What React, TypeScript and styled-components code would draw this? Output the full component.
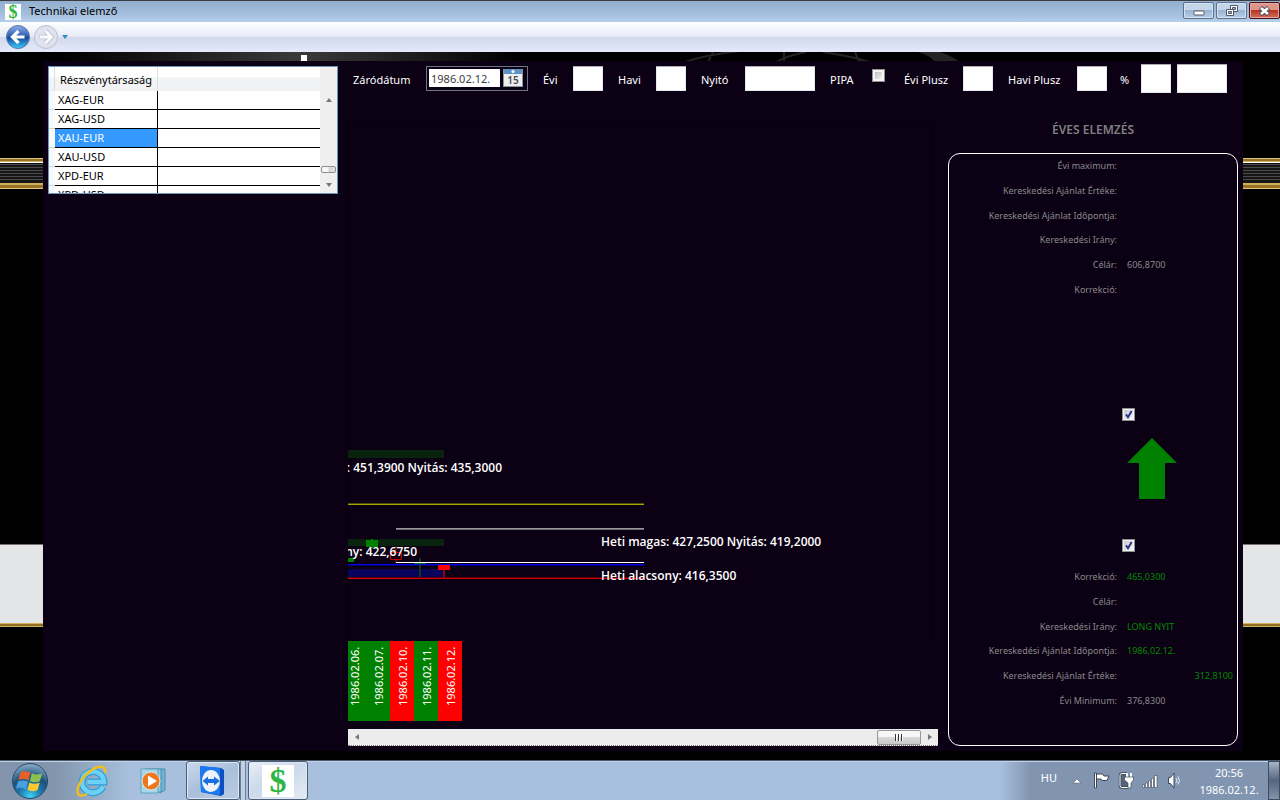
import React from "react";
import styled, { createGlobalStyle } from "styled-components";

const GlobalStyle = createGlobalStyle`
  * { box-sizing: border-box; }
  body {
    margin: 0;
    background: #000;
    font-family: "Noto Sans", "Open Sans", sans-serif;
    font-size: 11px;
    line-height: 16px;
    color: #fff;
  }
  button, input { font: inherit; }
`;

const Screen = styled.div`
  display: flex;
  flex-direction: column;
  min-height: 100vh;
`;

/* ---------- window frame ---------- */

const TitleBar = styled.header`
  display: flex;
  align-items: center;
  height: 22px;
  padding-left: 5px;
  border-top: 1px solid #3b3b42;
  background: linear-gradient(#93afcf, #a3bedc 60%, #b4cfec);
  color: #000;
`;

const AppTitle = styled.h1`
  flex: 1;
  margin: 0 0 2px 8px;
  font-size: 11px;
  font-weight: 400;
`;

const WindowButtons = styled.div`
  display: flex;
  align-self: flex-start;
  gap: 2px;
  padding-top: 1px;
`;

const WindowButton = styled.button<{ $danger?: boolean }>`
  display: flex;
  align-items: center;
  justify-content: center;
  width: 31px;
  height: 17px;
  padding: 0;
  border: 1px solid ${(p) => (p.$danger ? "#4a0f18" : "#5c708c")};
  border-radius: 2px;
  box-shadow: inset 0 0 0 1px ${(p) => (p.$danger ? "#e3a89f" : "#d5e3f2")};
  background: ${(p) =>
    p.$danger
      ? "linear-gradient(#dd9588 45%, #b9351f 50%, #d0705a)"
      : "linear-gradient(#c3d5e9 45%, #9ab4d0 50%, #b7cee6)"};
`;

const NavBar = styled.nav`
  display: flex;
  align-items: center;
  height: 30px;
  padding-left: 5px;
  background: linear-gradient(#fff, #e7ebf6 48%, #d1d9ec 52%, #e6eafa);
`;

const NavButton = styled.button`
  display: flex;
  padding: 0;
  border: 0;
  background: none;
`;

/* ---------- workspace ---------- */

const Workspace = styled.main`
  position: relative;
  flex: 1;
  display: flex;
  padding: 9px 37px 9px 43px;
  background:
    linear-gradient(
        #d9c27a 1px, #9a7426 1px 3px, #cdb05a 3px 4px, #fff 4px 5px, #111 5px 6px,
        #4a4a4a 6px 7px, #161616 7px 9px, #4a4a4a 9px 10px, #161616 10px 12px,
        #4a4a4a 12px 13px, #161616 13px 15px, #4a4a4a 15px 16px, #161616 16px 18px,
        #4a4a4a 18px 19px, #161616 19px 21px, #4a4a4a 21px 22px, #161616 22px 25px,
        #cdb05a 25px 27px, #9a7426 27px 30px, #e0c878 30px
      )
      0 106px / 100% 31px no-repeat,
    linear-gradient(
        #77706e 1px, #e4e5e7 1px 79px, #cdb05a 79px 80px, #8f6c22 80px 82px, #cdb05a 82px
      )
      0 492px / 100% 83px no-repeat,
    linear-gradient(90deg, #000 60px, #3a3a3a 300px, #262626 380px, #000 520px) 0 0 / 100% 9px
      no-repeat,
    #000;
`;

const Backdrop = styled.svg`
  position: absolute;
  top: 0;
  left: 0;
  width: 100%;
  height: 9px;
`;

const Panel = styled.section`
  flex: 1;
  min-width: 0;
  display: grid;
  grid-template-columns: 290px minmax(0, 1fr) 290px;
  grid-template-rows: 25px 1fr;
  column-gap: 10px;
  padding: 5px;
  background: #0c0014;
`;

/* ---------- company list ---------- */

const CompanyGrid = styled.div`
  grid-row: 1 / 3;
  align-self: start;
  display: flex;
  height: 128px;
  border: 1px solid #6c95bd;
  background: #fff;
  overflow: hidden;
`;

const CompanyTable = styled.table`
  flex: 1;
  align-self: flex-start;
  table-layout: fixed;
  border-collapse: separate;
  border-spacing: 0;
  color: #000;
`;

const HeadCell = styled.th<{ $width?: number }>`
  width: ${(p) => (p.$width ? `${p.$width}px` : "auto")};
  height: 24px;
  padding: 2px 0 0 5px;
  border-right: 1px solid #dcdde0;
  background: linear-gradient(#fff 40%, #f3f4f6 45%, #f0f1f3);
  text-align: left;
  font-weight: 400;
  white-space: nowrap;
  &:last-child { border-right: 0; }
`;

const RowHead = styled.td`
  padding: 0;
  border-bottom: 1px solid #d5d5d5;
  background: #f7f8fa;
`;

const Cell = styled.td<{ $selected?: boolean }>`
  height: 19px;
  padding: 1px 3px;
  border-bottom: 1px solid #000;
  border-right: ${(p) => (p.$selected === undefined ? "0" : "1px solid #000")};
  background: ${(p) => (p.$selected ? "#3399ff" : "#fff")};
  color: ${(p) => (p.$selected ? "#fff" : "#000")};
  white-space: nowrap;
`;

const VerticalScroll = styled.div`
  display: flex;
  flex-direction: column;
  align-items: center;
  width: 17px;
  padding-top: 24px;
  background: #efefef;
`;

const ScrollButton = styled.button`
  display: flex;
  align-items: center;
  justify-content: center;
  width: 17px;
  height: 17px;
  padding: 0;
  border: 0;
  background: none;
`;

const VerticalThumb = styled.div`
  width: 15px;
  height: 7px;
  margin: auto 0 3px;
  border: 1px solid #8f8f8f;
  border-radius: 2px;
  background: linear-gradient(90deg, #f7f7f7 45%, #d5d5d5 55%, #e2e2e2);
`;

/* ---------- filter bar ---------- */

const FilterBar = styled.form`
  grid-column: 2 / 4;
  display: flex;
  align-items: center;
  padding-left: 5px;
`;

const FieldLabel = styled.label<{ $width: number }>`
  flex: none;
  width: ${(p) => p.$width}px;
  padding-top: 2px;
  white-space: nowrap;
`;

const TextField = styled.input<{ $width: number; $gap?: number; $tall?: boolean }>`
  flex: none;
  width: ${(p) => p.$width}px;
  height: ${(p) => (p.$tall ? 29 : 25)}px;
  margin-right: ${(p) => p.$gap ?? 15}px;
  padding: 0 3px;
  border: 1px solid #e3e9ef;
  border-top-color: #abadb3;
  border-radius: 1px;
  background: #fff;
  color: #000;
`;

const DatePicker = styled.div`
  flex: none;
  display: flex;
  gap: 3px;
  width: 102px;
  height: 25px;
  margin-right: 15px;
  padding: 2px;
  border: 1px solid #6b7686;
`;

const DateInput = styled.input`
  width: 71px;
  height: 18px;
  padding: 0 2px;
  border: 0;
  background: #fff;
  color: #3c3c3c;
`;

const CalendarButton = styled.button`
  display: flex;
  padding: 0;
  border: 0;
  background: none;
`;

const Check = styled.input`
  appearance: none;
  flex: none;
  width: 13px;
  height: 13px;
  margin: 0;
  border: 1px solid #8e8f8f;
  background: linear-gradient(135deg, #b9bdc4, #f2f2f2) 50% / 7px 7px no-repeat, #f4f4f4;
  &:checked {
    background:
      url("data:image/svg+xml,%3Csvg xmlns='http://www.w3.org/2000/svg' viewBox='0 0 11 11'%3E%3Cpath d='M3 5.4 5 8.2 8.6 2' fill='none' stroke='%232b2f86' stroke-width='1.9'/%3E%3C/svg%3E"),
      linear-gradient(135deg, #c5c9cf, #f6f6f6) 50% / 9px 9px no-repeat, #f4f4f4;
  }
`;

const PipaCheck = styled(Check)`
  align-self: flex-start;
  margin: 3px 19px 0 0;
`;

/* ---------- chart ---------- */

const ChartPane = styled.div`
  display: flex;
  flex-direction: column;
  min-width: 0;
  padding-top: 30px;
  overflow: hidden;
`;

const ChartDrawing = styled.svg`
  flex: none;
  width: 100%;
  height: 520px;
  text {
    font-family: "Open Sans", sans-serif;
    font-size: 12px;
    font-weight: 600;
    fill: #fff;
  }
`;

const DateStrip = styled.div`
  display: flex;
  margin-left: -6px;
`;

const DateTile = styled.time<{ $up: boolean }>`
  display: flex;
  align-items: center;
  width: 24px;
  height: 80px;
  padding: 15px 5px 0 3px;
  writing-mode: vertical-rl;
  transform: rotate(180deg);
  font-size: 11px;
  background: ${(p) => (p.$up ? "#008000" : "#ff0000")};
`;

const HorizontalScroll = styled.div`
  display: flex;
  align-items: center;
  height: 17px;
  margin-top: auto;
  border-bottom: 1px dotted #777;
  background: #ececec;
`;

const HorizontalThumb = styled.div`
  display: flex;
  align-items: center;
  justify-content: center;
  gap: 1px;
  width: 44px;
  height: 15px;
  margin-left: auto;
  border: 1px solid #979797;
  border-radius: 2px;
  background: linear-gradient(#f6f6f6 45%, #d8d8d8 50%, #c9c9c9);
`;

const Grip = styled.span`
  width: 2px;
  height: 7px;
  border-left: 1px solid #333;
  background: #fff;
`;

/* ---------- yearly analysis ---------- */

const AnalysisPane = styled.aside`
  display: flex;
  flex-direction: column;
  padding-top: 31px;
`;

const AnalysisTitle = styled.h2`
  margin: 0 0 15px;
  font-size: 12px;
  font-weight: 600;
  line-height: 16px;
  text-align: center;
  color: #808080;
`;

const AnalysisBox = styled.div`
  flex: 1;
  display: flex;
  flex-direction: column;
  border: 1px solid #fff;
  border-radius: 12px;
`;

const Facts = styled.dl`
  display: grid;
  grid-template-columns: 168px 1fr;
  grid-template-rows: repeat(6, 1fr);
  align-items: center;
  column-gap: 10px;
  height: 148px;
  margin: 0;
  padding-right: 4px;
  font-size: 9px;
  color: #8a8a8a;
`;

const FactName = styled.dt`
  text-align: right;
  white-space: nowrap;
`;

const FactValue = styled.dd<{ $green?: boolean; $end?: boolean }>`
  margin: 0;
  color: ${(p) => (p.$green ? "#008a00" : "#8a8a8a")};
  text-align: ${(p) => (p.$end ? "right" : "left")};
`;

const Signal = styled.div`
  display: flex;
  flex-direction: column;
  align-items: flex-start;
  padding: 106px 0 13px 173px;
`;

const SignalArrow = styled.svg`
  margin: 17px 0 40px 5px;
`;

/* ---------- taskbar ---------- */

const Taskbar = styled.footer`
  display: flex;
  align-items: center;
  height: 40px;
  border-top: 1px solid #4c5a6c;
  box-shadow: inset 0 1px 0 #c3d5ea;
  background:
    linear-gradient(90deg, transparent, #8295b0 30px) 100% 0 / 280px 100% no-repeat,
    linear-gradient(90deg, #8295ad 55px, #a8c0dd 130px);
`;

const TaskButton = styled.button<{ $width: number; $open?: boolean; $active?: boolean }>`
  display: flex;
  align-items: center;
  justify-content: center;
  width: ${(p) => p.$width}px;
  height: 39px;
  padding: 0;
  border: ${(p) => (p.$open ? "1px solid #4d5f78" : "0")};
  border-radius: 3px;
  box-shadow: ${(p) => (p.$open ? "inset 0 0 0 1px #dce7f3" : "none")};
  background: ${(p) =>
    p.$active
      ? "linear-gradient(150deg, #e9eff7, #cbd9ea 45%, #e4ebf4)"
      : p.$open
        ? "linear-gradient(150deg, #cbdaec, #a9bfdb 50%, #b9cce3)"
        : "none"};
`;

const StackedEdge = styled.span`
  width: 6px;
  height: 39px;
  margin-right: 2px;
  border: solid #6c7f99;
  border-width: 0 1px;
  background: #bfd0e5;
`;

const Tray = styled.div`
  display: flex;
  align-items: center;
  gap: 8px;
  margin-left: auto;
`;

const Language = styled.span`
  margin: 0 8px 6px 0;
`;

const TrayExpander = styled.button`
  display: flex;
  margin-right: 4px;
  padding: 0;
  border: 0;
  background: none;
`;

const Clock = styled.time`
  width: 78px;
  line-height: 17px;
  text-align: center;
`;

const ShowDesktop = styled.button`
  width: 12px;
  height: 39px;
  padding: 0;
  border: 1px solid #3e4b5e;
  background: linear-gradient(#a5b3c6, #54657e 50%, #8393aa);
`;

const DollarBadge = styled.span<{ $size: number }>`
  display: flex;
  align-items: center;
  justify-content: center;
  width: ${(p) => p.$size}px;
  height: ${(p) => p.$size}px;
  background: #fff;
  color: #2db742;
  font-family: "Liberation Serif", serif;
  font-size: ${(p) => p.$size + 2}px;
  font-weight: 700;
  line-height: ${(p) => p.$size}px;
`;

const companies = ["XAG-EUR", "XAG-USD", "XAU-EUR", "XAU-USD", "XPD-EUR", "XPD-USD"];

const tradingDays = [
  { date: "1986.02.06.", up: true },
  { date: "1986.02.07.", up: true },
  { date: "1986.02.10.", up: false },
  { date: "1986.02.11.", up: true },
  { date: "1986.02.12.", up: false },
];

type Fact = { name: string; value?: string; green?: boolean; end?: boolean };

const upperFacts: Fact[] = [
  { name: "Évi maximum:" },
  { name: "Kereskedési Ajánlat Értéke:" },
  { name: "Kereskedési Ajánlat Időpontja:" },
  { name: "Kereskedési Irány:" },
  { name: "Célár:", value: "606,8700" },
  { name: "Korrekció:" },
];

const lowerFacts: Fact[] = [
  { name: "Korrekció:", value: "465,0300", green: true },
  { name: "Célár:" },
  { name: "Kereskedési Irány:", value: "LONG NYIT", green: true },
  { name: "Kereskedési Ajánlat Időpontja:", value: "1986.02.12.", green: true },
  { name: "Kereskedési Ajánlat Értéke:", value: "312,8100", green: true, end: true },
  { name: "Évi Minimum:", value: "376,8300" },
];

const FactList = ({ facts }: { facts: Fact[] }) => (
  <Facts>
    {facts.map((f) => (
      <React.Fragment key={f.name}>
        <FactName>{f.name}</FactName>
        <FactValue $green={f.green} $end={f.end}>
          {f.value}
        </FactValue>
      </React.Fragment>
    ))}
  </Facts>
);

const Triangle = ({ points, color = "#777" }: { points: string; color?: string }) => (
  <svg width="8" height="8" viewBox="0 0 8 8" aria-hidden="true">
    <polygon points={points} fill={color} />
  </svg>
);

const WindowFrame = () => (
  <>
    <TitleBar>
      <DollarBadge $size={16}>$</DollarBadge>
      <AppTitle>Technikai elemző</AppTitle>
      <WindowButtons>
        <WindowButton aria-label="Kis méret">
          <svg width="12" height="10" viewBox="0 0 12 10">
            <rect x="1" y="5" width="10" height="4" rx="0.5" fill="#fff" stroke="#535666" />
          </svg>
        </WindowButton>
        <WindowButton aria-label="Előző méret">
          <svg width="12" height="12" viewBox="0 0 12 12" stroke="#535666">
            <path d="M4.500 .5h7v6h-7z" fill="#fff" />
            <path d="M6.500 2.500h3v2h-3z" fill="#9ab4d0" />
            <path d="M.5 4.500h7v6h-7z" fill="#fff" />
            <path d="M2.500 6.500h3v2h-3z" fill="#9ab4d0" />
          </svg>
        </WindowButton>
        <WindowButton $danger aria-label="Bezárás">
          <svg width="13" height="10" viewBox="0 0 13 10">
            <path d="M2.500 1.500 10.500 8.500M10.500 1.500 2.500 8.500" stroke="#4c4f62" strokeWidth="4.600" />
            <path d="M3 2 10 8M10 2 3 8" stroke="#fff" strokeWidth="2.600" />
          </svg>
        </WindowButton>
      </WindowButtons>
    </TitleBar>
    <NavBar>
      <NavButton aria-label="Vissza">
        <svg width="28" height="26" viewBox="0 0 28 26">
          <defs>
            <linearGradient id="back" x2="0" y2="1">
              <stop offset="0" stopColor="#8fb0e6" />
              <stop offset=".48" stopColor="#2a5cb4" />
              <stop offset=".5" stopColor="#123f94" />
              <stop offset="1" stopColor="#3fd0ff" />
            </linearGradient>
          </defs>
          <circle cx="13" cy="13" r="11.500" fill="url(#back)" stroke="#5c78a8" />
          <path d="M19.500 13H8M13.500 7 7.500 13l6 6" fill="none" stroke="#fff" strokeWidth="3.200" />
        </svg>
      </NavButton>
      <NavButton aria-label="Előre">
        <svg width="26" height="26" viewBox="0 0 26 26">
          <circle cx="13" cy="13" r="11.500" fill="#e0e3ee" stroke="#b9bfd2" />
          <path d="M6.500 13H18M12.500 7l6 6-6 6" fill="none" stroke="#bcc1d0" strokeWidth="4.600" />
          <path d="M7 13h11M12.500 7l6 6-6 6" fill="none" stroke="#fafbff" strokeWidth="2.800" />
        </svg>
      </NavButton>
      <NavButton aria-label="Előzmények">
        <svg width="12" height="8" viewBox="0 0 12 8">
          <polygon points="3,2 9,2 6,6" fill="#2f8fc0" />
        </svg>
      </NavButton>
    </NavBar>
  </>
);

const CompanyList = () => (
  <CompanyGrid>
    <CompanyTable>
      <thead>
        <tr>
          <HeadCell $width={6} aria-label="Sor" />
          <HeadCell $width={103} scope="col">Részvénytársaság</HeadCell>
          <HeadCell aria-label="Adat" />
        </tr>
      </thead>
      <tbody>
        {companies.map((name) => (
          <tr key={name}>
            <RowHead />
            <Cell $selected={name === "XAU-EUR"}>{name}</Cell>
            <Cell />
          </tr>
        ))}
      </tbody>
    </CompanyTable>
    <VerticalScroll>
      <ScrollButton aria-label="Fel"><Triangle points="1,6 4,2 7,6" /></ScrollButton>
      <VerticalThumb />
      <ScrollButton aria-label="Le"><Triangle points="1,2 7,2 4,6" /></ScrollButton>
    </VerticalScroll>
  </CompanyGrid>
);

const Filters = () => (
  <FilterBar onSubmit={(e) => e.preventDefault()}>
    <FieldLabel $width={73} htmlFor="close-date">Záródátum</FieldLabel>
    <DatePicker>
      <DateInput id="close-date" defaultValue="1986.02.12." />
      <CalendarButton type="button" aria-label="Naptár">
        <svg width="20" height="18" viewBox="0 0 20 18">
          <rect x=".5" y=".5" width="19" height="17" fill="#eceeef" stroke="#8a929c" />
          <rect x="1" y="0" width="18" height="5" fill="#5d92c6" />
          <circle cx="10" cy="2.500" r="1.500" fill="#fff" />
          <text x="10" y="15" textAnchor="middle" fontSize="10" fontWeight="600" fill="#4a4f58">15</text>
        </svg>
      </CalendarButton>
    </DatePicker>
    <FieldLabel $width={30} htmlFor="yearly">Évi</FieldLabel>
    <TextField $width={30} id="yearly" />
    <FieldLabel $width={38} htmlFor="monthly">Havi</FieldLabel>
    <TextField $width={30} id="monthly" />
    <FieldLabel $width={44} htmlFor="opening">Nyitó</FieldLabel>
    <TextField $width={70} id="opening" />
    <FieldLabel $width={42} htmlFor="pipa">PIPA</FieldLabel>
    <PipaCheck type="checkbox" id="pipa" />
    <FieldLabel $width={59} htmlFor="yearly-plus">Évi Plusz</FieldLabel>
    <TextField $width={30} id="yearly-plus" />
    <FieldLabel $width={69} htmlFor="monthly-plus">Havi Plusz</FieldLabel>
    <TextField $width={30} $gap={13} id="monthly-plus" />
    <FieldLabel $width={21} htmlFor="percent">%</FieldLabel>
    <TextField $width={30} $gap={6} $tall id="percent" />
    <TextField $width={50} $gap={0} $tall aria-label="Érték" />
  </FilterBar>
);

const Chart = () => (
  <ChartPane>
    <ChartDrawing role="img" aria-label="Heti árfolyam">
      <path d="M.5 0V520M0 .5H583M583.500 0V520" stroke="#000" strokeDasharray="1 1" />
      <rect x="0" y="329" width="96" height="8" fill="#08240f" />
      <rect x="0" y="418" width="96" height="7" fill="#08240f" />
      <rect x="0" y="448" width="96" height="8" fill="#08045c" />
      <rect x="0" y="382" width="296" height="1" fill="#4d4b08" />
      <rect x="0" y="383" width="296" height="1" fill="#a8a400" />
      <rect x="48" y="407" width="248" height="1" fill="#9a979c" />
      <rect x="48" y="408" width="248" height="1" fill="#6d6972" />
      <rect x="0" y="437" width="6" height="4" fill="#008000" />
      <rect x="18" y="419" width="12" height="7" fill="#008000" />
      <rect x="23" y="418" width="2" height="9" fill="#008000" />
      <path d="M42.500 431.500h11v7h-11zM48 425v6M48 439v3" fill="none" stroke="#c80000" />
      <rect x="0" y="443" width="296" height="1" fill="#0000f0" />
      <rect x="0" y="444" width="296" height="1" fill="#060070" />
      <rect x="0" y="456" width="296" height="1" fill="#5a000a" />
      <rect x="0" y="457" width="296" height="1" fill="#d80004" />
      <rect x="71" y="437" width="2" height="19" fill="#0a3a20" />
      <rect x="66" y="442" width="12" height="1" fill="#0a6a1c" />
      <rect x="95" y="444" width="2" height="13" fill="#8c000c" />
      <rect x="90" y="444" width="12" height="5" fill="#ff0000" />
      <rect x="48" y="441" width="248" height="1" fill="#fff" />
      <text x="154" y="351" textAnchor="end">: 451,3900 Nyitás: 435,3000</text>
      <text x="69" y="435" textAnchor="end">ny: 422,6750</text>
      <text x="253" y="425">Heti magas: 427,2500 Nyitás: 419,2000</text>
      <text x="253" y="459">Heti alacsony: 416,3500</text>
    </ChartDrawing>
    <DateStrip>
      {tradingDays.map((d) => (
        <DateTile key={d.date} $up={d.up}>{d.date}</DateTile>
      ))}
    </DateStrip>
    <HorizontalScroll>
      <ScrollButton aria-label="Balra"><Triangle points="6,1 2,4 6,7" /></ScrollButton>
      <HorizontalThumb><Grip /><Grip /><Grip /></HorizontalThumb>
      <ScrollButton aria-label="Jobbra"><Triangle points="2,1 6,4 2,7" /></ScrollButton>
    </HorizontalScroll>
  </ChartPane>
);

const Analysis = () => (
  <AnalysisPane>
    <AnalysisTitle>ÉVES ELEMZÉS</AnalysisTitle>
    <AnalysisBox>
      <FactList facts={upperFacts} />
      <Signal>
        <Check type="checkbox" defaultChecked aria-label="Felső jelzés" />
        <SignalArrow width="50" height="61" viewBox="0 0 50 61">
          <polygon points="25,0 50,25 38,25 38,61 12,61 12,25 0,25" fill="#008000" />
        </SignalArrow>
        <Check type="checkbox" defaultChecked aria-label="Alsó jelzés" />
      </Signal>
      <FactList facts={lowerFacts} />
    </AnalysisBox>
  </AnalysisPane>
);

const StartOrb = () => (
  <svg width="38" height="38" viewBox="0 0 38 38">
    <defs>
      <radialGradient id="orb" cx=".5" cy=".95" r=".9">
        <stop offset="0" stopColor="#3fd3f5" />
        <stop offset=".35" stopColor="#1c7cae" />
        <stop offset=".65" stopColor="#1d4f7c" />
        <stop offset="1" stopColor="#7fa3c0" />
      </radialGradient>
    </defs>
    <circle cx="19" cy="19" r="17.500" fill="url(#orb)" stroke="#274866" />
    <path d="M9.500 10.500c3.500-2 6.800-1.600 10 .1l-2.100 7.800c-3.300-1.700-6.600-2-10-.2z" fill="#e5602a" />
    <path d="M20.800 11.300c3.300 1.700 6.600 1.700 10.400 0l-2.200 7.800c-3.500 1.700-6.900 1.500-10.200-.1z" fill="#8cc152" />
    <path d="M6.900 19.600c3.400-1.800 6.700-1.400 10 .2l-2 7.400c-3.300-1.700-6.600-2-10-.2z" fill="#4a9fdf" />
    <path d="M18.400 20.500c3.300 1.700 6.700 1.700 10.300 0l-2.100 7.400c-3.600 1.700-7 1.600-10.200-.1z" fill="#fbc832" />
  </svg>
);

const BrowserIcon = () => (
  <svg width="32" height="34" viewBox="0 0 32 34">
    <path d="M27 22.500A11 10.500 0 1 1 28 18H11.500" fill="none" stroke="#2e9fd6" strokeWidth="7" />
    <path d="M27 22.500A11 10.500 0 1 1 28 18H11.500" fill="none" stroke="#6fd0f5" strokeWidth="4.500" />
    <path
      d="M29 9C31 1 22 1 13 8S-1 27 3 31c2 1.500 5 .5 8-1"
      fill="none"
      stroke="#f2bd1d"
      strokeWidth="2.500"
    />
  </svg>
);

const MediaIcon = () => (
  <svg width="30" height="28" viewBox="0 0 30 28">
    <path d="M9 2h16v21l-5 3z" fill="#6fb4d4" stroke="#4a8fb2" />
    <path d="M5 2h16v23H5z" fill="#93cbe2" stroke="#4a8fb2" />
    <path d="M1 2h17v24H1z" fill="#a9d6e8" stroke="#5fa3c2" />
    <circle cx="11" cy="14" r="9" fill="#f0761e" stroke="#d8e6ec" />
    <path d="M8 8.500 17 14 8 19.500z" fill="#fff" />
  </svg>
);

const RemoteIcon = () => (
  <svg width="30" height="32" viewBox="0 0 30 32">
    <path d="M2 1 23 3 26 5V29L23 31 3 27z" fill="#0b4fc0" />
    <path d="M2 1 22 3V30L3 27z" fill="#1c7af0" />
    <ellipse cx="13" cy="16" rx="9" ry="11" fill="#eef3fa" />
    <path d="M4.500 16 10 11.500v2.500h6v-2.500l6 4.500-6 4.500v-2.500h-6v2.500z" fill="#1c6fe0" />
  </svg>
);

const SystemTray = () => (
  <Tray>
    <Language>HU</Language>
    <TrayExpander aria-label="Rejtett ikonok">
      <svg width="8" height="6" viewBox="0 0 8 6">
        <polygon points="4,1 8,5 0,5" fill="#fff" stroke="#4a5568" strokeWidth=".5" />
      </svg>
    </TrayExpander>
    <svg width="17" height="17" viewBox="0 0 17 17" stroke="#3d4656">
      <path d="M1.500 1h2v15h-2z" fill="#fff" />
      <path d="M3.500 2h6l1.500 2h5l-2 4.500H9l-1-1.500H3.500z" fill="#fff" />
    </svg>
    <svg width="16" height="17" viewBox="0 0 16 17">
      <path d="M9 1.500H4q-2 0-2 2v10q0 2 2 2h6" fill="#56657c" stroke="#3d4656" strokeWidth="2.500" />
      <path d="M9 1.500H4q-2 0-2 2v10q0 2 2 2h6" fill="none" stroke="#fff" />
      <path d="M9 1v4M13 1v4" stroke="#fff" strokeWidth="2" />
      <path d="M6.500 5H15.500v3L13 11v5h-3v-5L6.500 8z" fill="#fff" stroke="#3d4656" strokeWidth=".7" />
    </svg>
    <svg width="16" height="14" viewBox="0 0 16 14" fill="#fff" stroke="#3d4656" strokeWidth=".6">
      <path d="M.5 11h2v2.500h-2zM3.500 9h2v4.500h-2zM6.500 7h2v6.500h-2zM9.500 4.500h2v9h-2zM12.500 1.500h2.500v12h-2.500z" />
    </svg>
    <svg width="16" height="17" viewBox="0 0 16 17">
      <path d="M2.500 5.500h2l3.500-4.500v15l-3.500-4.500h-2z" fill="#fff" stroke="#3d4656" />
      <path d="M10 6q2 2.500 0 5M12 4.500q3 4 0 8" fill="none" stroke="#e9eef5" />
    </svg>
    <Clock>
      20:56
      <br />
      1986.02.12.
    </Clock>
  </Tray>
);

export default function App() {
  return (
    <Screen>
      <GlobalStyle />
      <WindowFrame />
      <Workspace>
        <Backdrop aria-hidden="true" fill="none" stroke="#242424" strokeWidth="2">
          <path d="M685 10Q705 3 740-1M713 0 708 10M784 0V9M776 10Q786 4 806 0M823 0Q850 4 870 10M855 0 859 10" />
          <path d="M918 0h22q12 4 18 9h-24q-5-6-16-9z" fill="#242424" stroke="none" />
          <rect x="301" y="3" width="6" height="6" fill="#fff" stroke="none" />
        </Backdrop>
        <Panel>
          <CompanyList />
          <Filters />
          <Chart />
          <Analysis />
        </Panel>
      </Workspace>
      <Taskbar>
        <TaskButton $width={60} aria-label="Start"><StartOrb /></TaskButton>
        <TaskButton $width={64} aria-label="Internet Explorer"><BrowserIcon /></TaskButton>
        <TaskButton $width={62} aria-label="Médialejátszó"><MediaIcon /></TaskButton>
        <TaskButton $width={54} $open aria-label="Távoli elérés"><RemoteIcon /></TaskButton>
        <StackedEdge />
        <TaskButton $width={60} $open $active aria-label="Technikai elemző">
          <DollarBadge $size={32}>$</DollarBadge>
        </TaskButton>
        <SystemTray />
        <ShowDesktop aria-label="Asztal megjelenítése" />
      </Taskbar>
    </Screen>
  );
}
